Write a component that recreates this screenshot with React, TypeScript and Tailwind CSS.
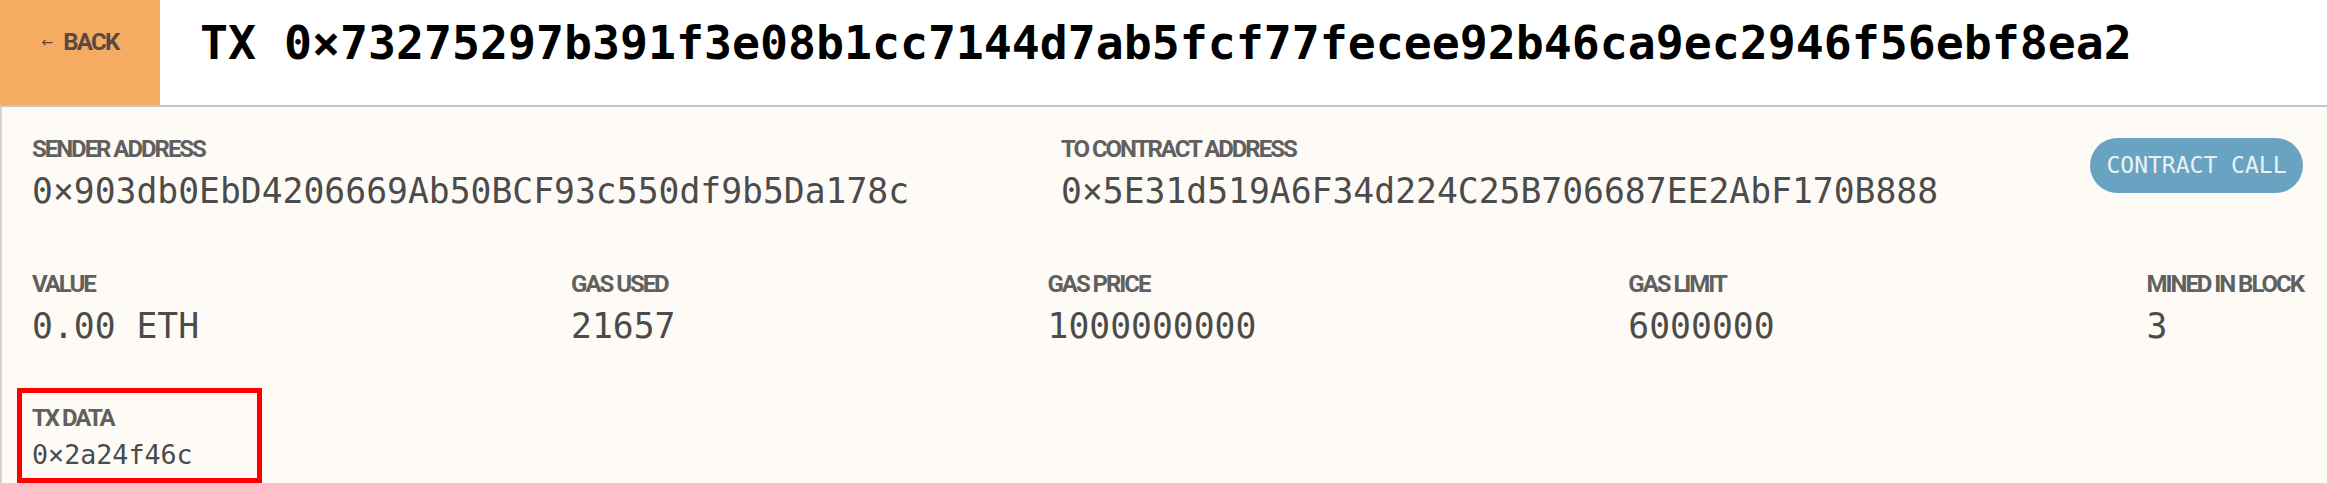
import React from 'react';

const label = "font-['Roboto',sans-serif] font-bold text-[24px] leading-none tracking-[-0.085em] text-[#606060] uppercase";
const mono = "font-['DejaVu_Sans_Mono',monospace]";

interface FieldProps {
  title: string;
  value: string;
  small?: boolean;
}

const Field: React.FC<FieldProps> = ({ title, value, small }) => {
  return (
    <div className="flex flex-col">
      <div className={label}>{title}</div>
      <div
        className={
          small
            ? `${mono} mt-[12px] text-[26.7px] leading-none text-[#4b4b4b] whitespace-nowrap`
            : `${mono} mt-[13px] text-[34.7px] leading-none text-[#4b4b4b] whitespace-nowrap`
        }
      >
        {value}
      </div>
    </div>
  );
};

const App: React.FC = () => {
  const stats = [
    { title: 'Value', value: '0.00 ETH' },
    { title: 'Gas Used', value: '21657' },
    { title: 'Gas Price', value: '1000000000' },
    { title: 'Gas Limit', value: '6000000' },
    { title: 'Mined in Block', value: '3' },
  ];

  return (
    <div className="w-[2327px] h-[484px] flex flex-col bg-white overflow-hidden">
      {/* Header */}
      <div className="flex h-[107px] shrink-0 border-b-2 border-[#c6c6c6] bg-white">
        <div className="w-[160px] h-full bg-[#f5ab62] flex justify-center pt-[30px]">
          <div className="flex items-start gap-[10px] text-[#5b4843]">
            <span className="font-['DejaVu_Sans',sans-serif] text-[14px] leading-[24px]">←</span>
            <span className="font-['Roboto',sans-serif] font-bold text-[24px] leading-none tracking-[-0.07em]">BACK</span>
          </div>
        </div>
        <h1 className={`${mono} font-bold text-[46.5px] leading-none text-black pl-[40px] pt-[20px] whitespace-nowrap`}>
          TX 0×73275297b391f3e08b1cc7144d7ab5fcf77fecee92b46ca9ec2946f56ebf8ea2
        </h1>
      </div>

      {/* Body */}
      <div className="flex-1 bg-[#fefbf6] border-l-2 border-b-2 border-[#d4d4d4] pl-[30px] pr-[24px] pt-[30px] flex flex-col">
        <div className="flex justify-between items-start">
          <Field title="Sender Address" value="0×903db0EbD4206669Ab50BCF93c550df9b5Da178c" />
          <Field title="To Contract Address" value="0×5E31d519A6F34d224C25B706687EE2AbF170B888" />
          <div className={`${mono} mt-[1px] w-[213px] h-[55px] rounded-full bg-[#68a4c1] text-[#e9f1f5] text-[23px] flex items-center justify-center whitespace-nowrap`}>
            CONTRACT CALL
          </div>
        </div>

        <div className="flex justify-between items-start mt-[63px]">
          {stats.map((s, i) => (
            <Field key={i} title={s.title} value={s.value} />
          ))}
        </div>

        {/* Highlighted tx data */}
        <div className="mt-[45px] -ml-[15px] w-[245px] border-[5px] border-[#ff0000] pl-[10px] pt-[13px] pb-[9px]">
          <Field title="TX Data" value="0×2a24f46c" small />
        </div>
      </div>
    </div>
  );
};

export default App;
